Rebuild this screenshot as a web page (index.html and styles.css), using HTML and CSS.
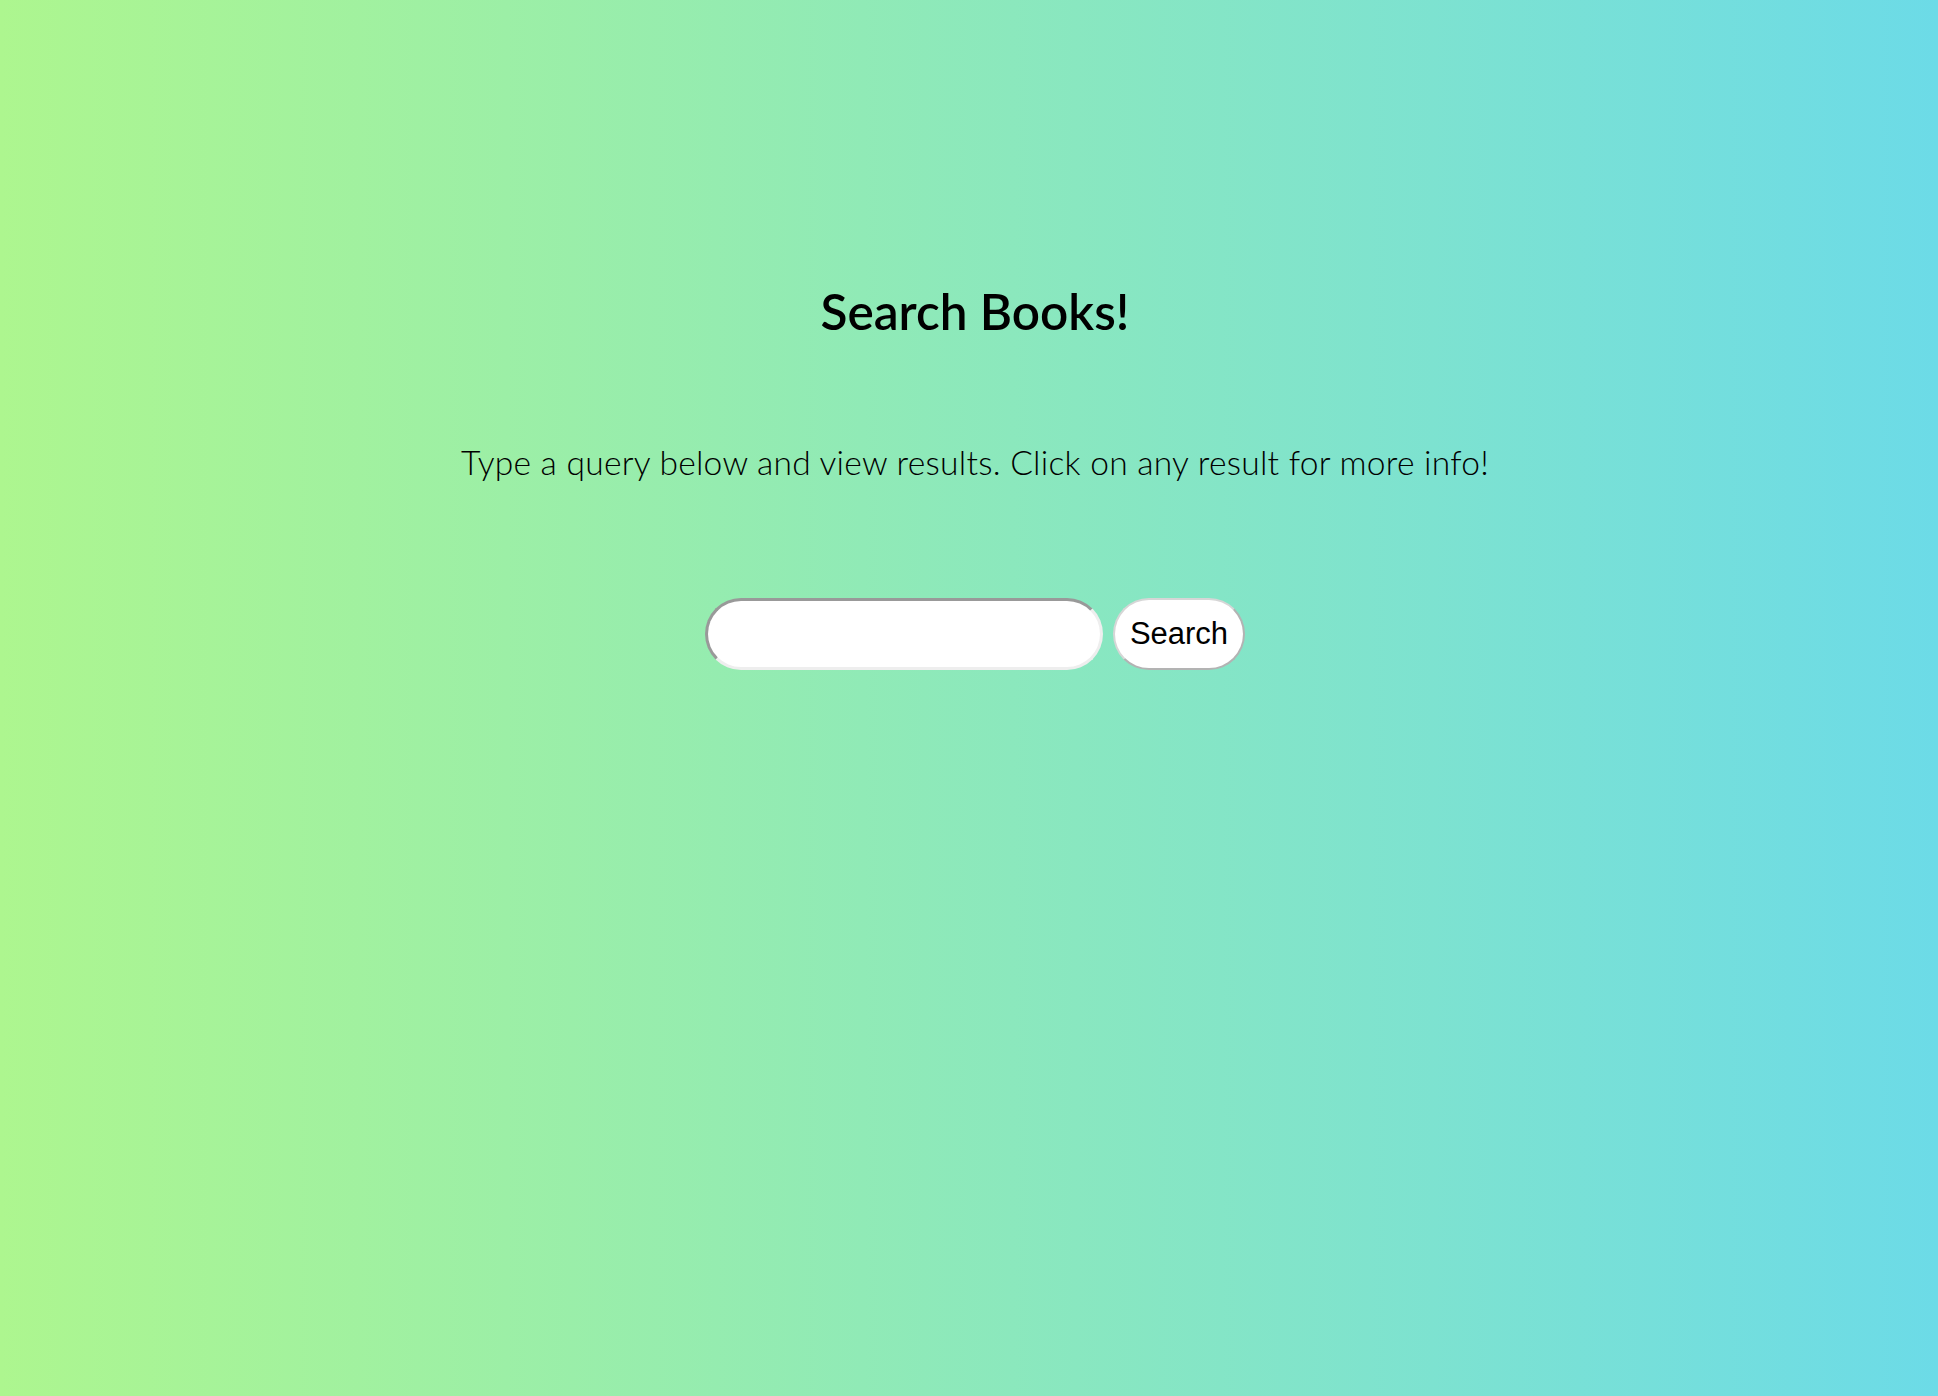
FILE: index.html
```html
<!DOCTYPE html>
<html lang="en">
<head>
<meta charset="utf-8">
<title>Search Books</title>
<link rel="stylesheet" href="styles.css">
</head>
<body>
<main class="page">
  <h1 class="title">Search Books!</h1>
  <p class="lead">Type a query below and view results. Click on any result for more info!</p>
  <form class="search">
    <input class="search-input" type="text" aria-label="Search query">
    <button class="search-btn" type="button">Search</button>
  </form>
</main>
</body>
</html>
```

FILE: styles.css
```css
html, body {
  margin: 0;
  padding: 0;
}
body {
  min-height: 100vh;
  background: linear-gradient(to right, #adf68f 0%, #6cdbe7 100%);
  font-family: Lato, "Noto Sans", sans-serif;
  color: #000;
}
.page {
  padding: 281px 0 0 12px;
  text-align: center;
}
.title {
  margin: 0;
  font-size: 49.5px;
  font-weight: 600;
  line-height: 60px;
}
.lead {
  margin: 101px 0 0;
  font-size: 33.6px;
  font-weight: 300;
  line-height: 40px;
  letter-spacing: 0.25px;
}
.search {
  margin-top: 116px;
  display: flex;
  justify-content: center;
  align-items: center;
  gap: 10px;
}
.search-input {
  box-sizing: border-box;
  width: 398px;
  height: 72px;
  border: 3px solid;
  border-color: #999 #eee #eee #999;
  border-radius: 36px;
  background: #fff;
  padding: 0 24px;
  font-size: 24px;
  outline: none;
}
.search-btn {
  box-sizing: border-box;
  width: 132px;
  height: 72px;
  border: 2px solid;
  border-color: #d6d6d6 #b3b3b3 #b3b3b3 #d6d6d6;
  border-radius: 36px;
  background: #fff;
  padding: 0;
  font-family: "Liberation Sans", Arial, sans-serif;
  font-size: 31px;
  color: #000;
}
```
